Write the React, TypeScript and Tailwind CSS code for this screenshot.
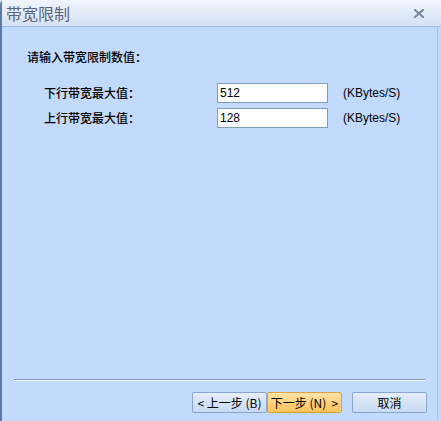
const cjk = '"Noto Sans CJK SC", "Liberation Sans", sans-serif';

function WizardButton({ children, primary }: { children: React.ReactNode; primary?: boolean }) {
  return (
    <button
      type="button"
      className={
        primary
          ? 'flex h-[21px] w-[75px] items-center justify-center whitespace-pre rounded-[2px] border border-[#d9a24a] bg-gradient-to-b from-[#ffe3a8] via-[#ffd27e] to-[#ffc35a] text-[12px] text-black'
          : 'flex h-[21px] w-[75px] items-center justify-center whitespace-pre rounded-[2px] border border-[#8aa6d0] bg-gradient-to-b from-[#e6eefa] via-[#d6e4f7] to-[#c8daf2] text-[12px] text-black'
      }
    >
      {children}
    </button>
  );
}

function LimitRow({ label, value }: { label: string; value: string }) {
  return (
    <div className="flex h-[20px] items-center">
      <span className="w-[173px] text-[12px] font-medium leading-[16px] text-black">{label}</span>
      <input
        type="text"
        defaultValue={value}
        className="h-[20px] w-[111px] border border-[#7f9db9] bg-white px-[2px] text-[12px] text-black outline-none"
        style={{ fontFamily: '"Liberation Sans", sans-serif' }}
      />
      <span className="ml-[15px] text-[12px] text-black" style={{ fontFamily: '"Liberation Sans", sans-serif' }}>
        (KBytes/S)
      </span>
    </div>
  );
}

export default function App() {
  return (
    <div className="h-[421px] w-[441px] overflow-hidden bg-[#c2dafc]" style={{ fontFamily: cjk }}>
      <div className="flex h-full w-full flex-col rounded-t-[5px] border-l-2 border-[#5a7aae]">
        <div className="flex h-[27px] items-center justify-between border-b border-[#9dbbe3] bg-gradient-to-b from-[#f1f5fc] to-[#d4e2f5] pl-[4px] pr-[17px]">
          <span className="text-[16px] leading-[20px] text-[#5b6579]">带宽限制</span>
          <svg width="10" height="9" viewBox="0 0 10 9">
            <path d="M1 1 L9 8 M9 1 L1 8" stroke="#7b879c" strokeWidth="2.2" strokeLinecap="square" />
          </svg>
        </div>

        <div className="mr-[3px] flex flex-1 flex-col border-r border-[#a4bde3]">
          <div className="mt-[22px] pl-[25px] text-[12px] font-medium leading-[16px] text-black">请输入带宽限制数值：</div>
          <div className="mt-[18px] flex flex-col gap-[5px] pl-[42px]">
            <LimitRow label="下行带宽最大值：" value="512" />
            <LimitRow label="上行带宽最大值：" value="128" />
          </div>

          <div className="flex-1" />

          <div className="mx-[12px] border-b border-t border-[#7d96c0] border-b-white" />

          <div className="mb-[8px] mt-[11px] flex justify-end pr-[10px]">
            <WizardButton>&lt; 上一步 (B)</WizardButton>
            <WizardButton primary>下一步 (N)  &gt;</WizardButton>
            <div className="w-[10px]" />
            <WizardButton>取消</WizardButton>
          </div>
        </div>
      </div>
    </div>
  );
}
